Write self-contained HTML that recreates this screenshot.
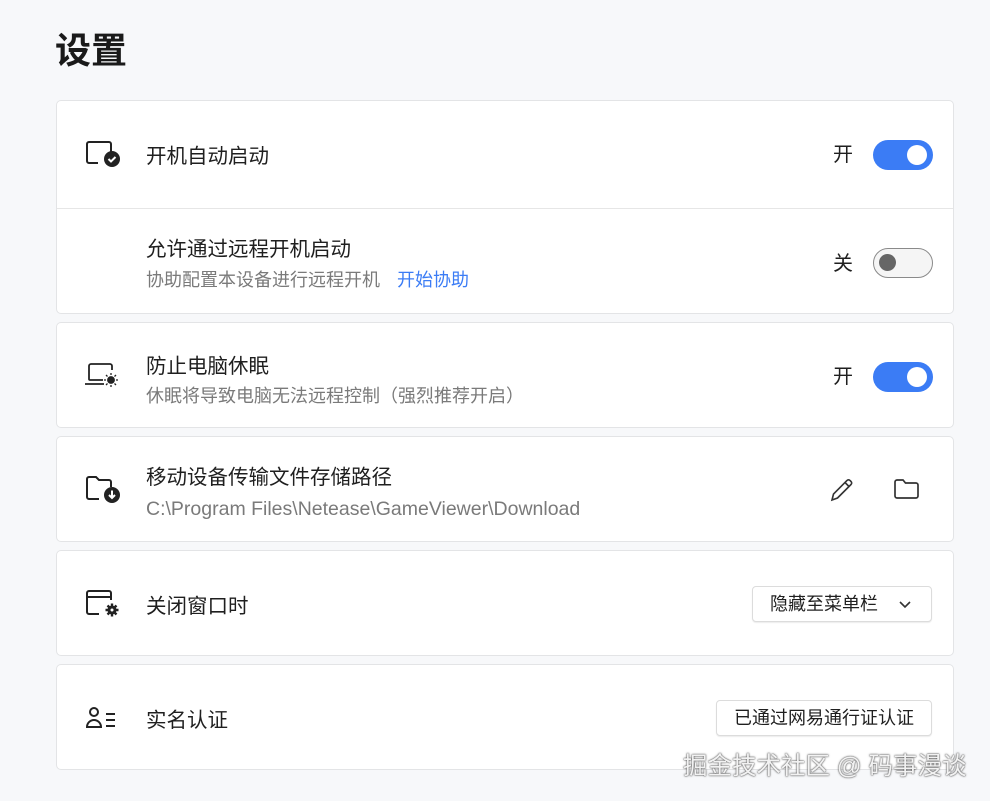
<!DOCTYPE html>
<html><head><meta charset="utf-8"><style>
*{margin:0;padding:0;box-sizing:border-box}
body{width:990px;height:801px;background:#f7f8fa;font-family:"Liberation Sans","Noto Sans CJK SC",sans-serif;color:#1f1f1f;position:relative;overflow:hidden}
h1{position:absolute;left:55px;top:27px;font-size:36px;font-weight:bold;color:#1a1a1a;line-height:48px}
.card{position:absolute;left:56px;width:898px;background:#fff;border:1px solid #e3e4e6;border-radius:5px}
.t{position:absolute;left:89px;font-size:20.5px;line-height:26px;color:#1f1f1f;white-space:nowrap}
.s{position:absolute;left:89px;font-size:18px;line-height:22px;color:#7a7a7a;white-space:nowrap}
.ic{position:absolute;left:27px}
.lab{position:absolute;left:776px;font-size:20px;line-height:26px}
.tg{position:absolute;left:816px;width:60px;height:30px;border-radius:15px}
.on{background:#3b7cf5}
.on::after{content:"";position:absolute;right:6px;top:5px;width:20px;height:20px;border-radius:50%;background:#fff}
.off{background:#f5f5f5;border:1.5px solid #8a8a8a}
.off::after{content:"";position:absolute;left:5px;top:5px;width:17px;height:17px;border-radius:50%;background:#666}
.btn{position:absolute;border:1px solid #dcdcdc;border-radius:4px;background:#fff;font-size:18px;line-height:34px;box-shadow:0 1px 1px rgba(0,0,0,.08);white-space:nowrap}
.wm{position:absolute;left:683px;top:747px;font-size:24.5px;color:#f2f2f2;text-shadow:0 0 2px #555,0 0 1px #333;white-space:nowrap}
</style></head><body>
<h1>设置</h1>

<div class="card" style="top:100px;height:214px">
  <svg class="ic" style="top:37px" width="40" height="32" viewBox="0 0 40 32" fill="none" stroke="#222" stroke-width="2"><path d="M14 25H5a2 2 0 0 1-2-2V6a2 2 0 0 1 2-2h20a2 2 0 0 1 2 2v8"/><circle cx="28" cy="21" r="8" fill="#222" stroke="none"/><path d="M24.5 21l2.5 2.5 4.5-4.5" stroke="#fff"/></svg>
  <div class="t" style="top:43px">开机自动启动</div>
  <div class="lab" style="top:41px">开</div>
  <div class="tg on" style="top:39px"></div>
  <div style="position:absolute;left:0;right:0;top:107px;border-top:1px solid #e6e6e6"></div>
  <div class="t" style="top:136px">允许通过远程开机启动</div>
  <div class="s" style="top:168px">协助配置本设备进行远程开机 <span style="color:#3b7cf5;margin-left:12px">开始协助</span></div>
  <div class="lab" style="top:150px">关</div>
  <div class="tg off" style="top:147px"></div>
</div>

<div class="card" style="top:322px;height:106px">
  <svg class="ic" style="top:36px" width="40" height="32" viewBox="0 0 40 32" fill="none" stroke="#222" stroke-width="1.8"><path d="M19 21H6a1 1 0 0 1-1-1V7a2 2 0 0 1 2-2h19a2 2 0 0 1 2 2v4"/><path d="M1 25h19"/><circle cx="27" cy="21" r="3" fill="#222"/><path d="M27 14v2M27 26v2M20 21h2M32 21h2M22 16l1.5 1.5M30.5 24.5L32 26M22 26l1.5-1.5M30.5 17.5L32 16" stroke-width="1.3"/></svg>
  <div class="t" style="top:31px">防止电脑休眠</div>
  <div class="s" style="top:62px">休眠将导致电脑无法远程控制（强烈推荐开启）</div>
  <div class="lab" style="top:41px">开</div>
  <div class="tg on" style="top:39px"></div>
</div>

<div class="card" style="top:436px;height:106px">
  <svg class="ic" style="top:36px" width="40" height="32" viewBox="0 0 40 32" fill="none" stroke="#222" stroke-width="2"><path d="M15 26H5a2 2 0 0 1-2-2V6a2 2 0 0 1 2-2h7l3 3h10a2 2 0 0 1 2 2v5"/><circle cx="28" cy="22" r="8" fill="#222" stroke="none"/><path d="M28 17.5v7M25 22l3 3 3-3" stroke="#fff"/></svg>
  <div class="t" style="top:28px">移动设备传输文件存储路径</div>
  <div class="s" style="top:60px;font-size:19.5px;line-height:24px">C:\Program Files\Netease\GameViewer\Download</div>
  <svg style="position:absolute;left:772px;top:40px" width="26" height="26" viewBox="0 0 26 26" fill="none" stroke="#333" stroke-width="1.6"><path d="M3 23l1.5-6L18 3.5a2 2 0 0 1 3 0l1 1a2 2 0 0 1 0 3L8.5 21z"/><path d="M16 5.5l4 4"/></svg>
  <svg style="position:absolute;left:836px;top:40px" width="28" height="24" viewBox="0 0 28 24" fill="none" stroke="#333" stroke-width="1.7"><path d="M2 5a2 2 0 0 1 2-2h6l2.5 3H23a2 2 0 0 1 2 2v11a2 2 0 0 1-2 2H4a2 2 0 0 1-2-2z"/></svg>
</div>

<div class="card" style="top:550px;height:106px">
  <svg class="ic" style="top:36px" width="40" height="32" viewBox="0 0 40 32" fill="none" stroke="#222" stroke-width="2"><path d="M15 27H5a2 2 0 0 1-2-2V6a2 2 0 0 1 2-2h20a2 2 0 0 1 2 2v7M3 10h24"/><circle cx="28" cy="23" r="4.5" fill="#222" stroke="none"/><path d="M28 16.5v3M28 26.5v3M21.5 23h3M31.5 23h3M23.5 18.5l2 2M30.5 25.5l2 2M23.5 27.5l2-2M30.5 20.5l2-2" stroke-width="2.4"/><circle cx="28" cy="23" r="1.5" fill="#fff" stroke="none"/></svg>
  <div class="t" style="top:43px">关闭窗口时</div>
  <div class="btn" style="left:695px;top:35px;width:180px;height:36px;padding-left:17px">隐藏至菜单栏<svg style="position:absolute;left:146px;top:13px" width="12" height="9" viewBox="0 0 12 9" fill="none" stroke="#333" stroke-width="1.6"><path d="M1 2l5 5 5-5"/></svg></div>
</div>

<div class="card" style="top:664px;height:106px">
  <svg class="ic" style="top:40px" width="40" height="26" viewBox="0 0 40 26" fill="none" stroke="#222" stroke-width="2"><circle cx="10" cy="7" r="4"/><path d="M3 22a7 7 0 0 1 14 0z"/><path d="M22 9h9M22 15h9M22 21h9"/></svg>
  <div class="t" style="top:43px">实名认证</div>
  <div class="btn" style="left:659px;top:35px;width:216px;height:36px;padding-left:17px">已通过网易通行证认证</div>
</div>

<div class="wm">掘金技术社区 @ 码事漫谈</div>
</body></html>
